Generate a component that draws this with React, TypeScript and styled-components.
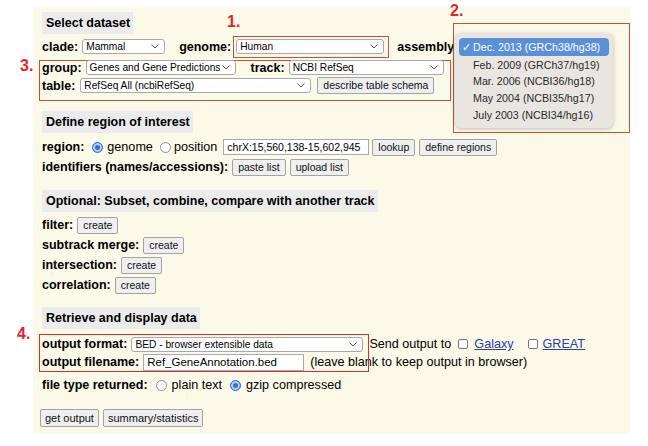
import React from 'react';
import styled, { createGlobalStyle } from 'styled-components';

const GlobalStyle = createGlobalStyle`
    body {
        margin: 0;
        background: #ffffff;
        font-family: "Liberation Sans", Arial, sans-serif;
        color: #000;
    }
`

const assemblies = [
    "Dec. 2013 (GRCh38/hg38)",
    "Feb. 2009 (GRCh37/hg19)",
    "Mar. 2006 (NCBI36/hg18)",
    "May 2004 (NCBI35/hg17)",
    "July 2003 (NCBI34/hg16)",
]

const Chevron = () => (
    <svg width="8" height="5" viewBox="0 0 8 5">
        <polyline points="0.5,0.5 4,4 7.5,0.5" fill="none" stroke="#555" strokeWidth="1" />
    </svg>
)

const Select = ({ width, children }: { width: number; children: React.ReactNode }) => (
    <SelectBox $w={width}>
        <span>{children}</span>
        <Chevron />
    </SelectBox>
)

const Radio = ({ checked }: { checked?: boolean }) => <RadioDot $on={checked} />

export default function App() {
    return (
        <Page>
            <GlobalStyle />
            <Panel>
                <Marker $x={194} $y={7}>1.</Marker>
                <Marker $x={417} $y={-4}>2.</Marker>
                <Marker $x={-13} $y={51}>3.</Marker>
                <Marker $x={-16} $y={319}>4.</Marker>

                <AssemblyFrame>
                    <Menu>
                        {assemblies.map((a, i) => (
                            <MenuItem key={a} $active={i === 0}>
                                <Check>{i === 0 ? '✓' : ''}</Check>
                                {a}
                            </MenuItem>
                        ))}
                    </Menu>
                </AssemblyFrame>

                <Title>Select dataset</Title>
                <Row $h={23} $mt={1}>
                    <Label>clade:</Label>
                    <Spacer $w={4} />
                    <Select width={83}>Mammal</Select>
                    <Spacer $w={14} />
                    <Label>genome:</Label>
                    <Spacer $w={2} />
                    <Outline>
                        <Select width={148}>Human</Select>
                    </Outline>
                    <Spacer $w={8} />
                    <Label>assembly:</Label>
                </Row>

                <Group>
                    <Row $h={13}>
                        <Label>group:</Label>
                        <Spacer $w={4} />
                        <Select width={150}>Genes and Gene Predictions</Select>
                        <Spacer $w={15} />
                        <Label>track:</Label>
                        <Spacer $w={4} />
                        <Select width={155}>NCBI RefSeq</Select>
                    </Row>
                    <Row $h={17} $mt={3}>
                        <Label>table:</Label>
                        <Spacer $w={5} />
                        <Select width={231}>RefSeq All (ncbiRefSeq)</Select>
                        <Spacer $w={6} />
                        <Button>describe table schema</Button>
                    </Row>
                </Group>

                <Title $mt={10}>Define region of interest</Title>
                <Row $h={20} $mt={4}>
                    <Label>region:</Label>
                    <Spacer $w={8} />
                    <Radio checked />
                    <Spacer $w={4} />
                    <Text>genome</Text>
                    <Spacer $w={7} />
                    <Radio />
                    <Spacer $w={3} />
                    <Text>position</Text>
                    <Spacer $w={6} />
                    <Input $w={146}>chrX:15,560,138-15,602,945</Input>
                    <Spacer $w={3} />
                    <Button>lookup</Button>
                    <Spacer $w={4} />
                    <Button>define regions</Button>
                </Row>
                <Row $h={20}>
                    <Label>identifiers (names/accessions):</Label>
                    <Spacer $w={4} />
                    <Button>paste list</Button>
                    <Spacer $w={4} />
                    <Button>upload list</Button>
                </Row>

                <Title $mt={13}>Optional: Subset, combine, compare with another track</Title>
                <Rows $mt={3}>
                    {["filter:", "subtrack merge:", "intersection:", "correlation:"].map(l => (
                        <Row key={l} $h={20}>
                            <Label>{l}</Label>
                            <Spacer $w={4} />
                            <Button>create</Button>
                        </Row>
                    ))}
                </Rows>

                <Title $mt={12}>Retrieve and display data</Title>
                <Output>
                    <OutputFrame />
                    <Row $h={18}>
                        <Label>output format:</Label>
                        <Spacer $w={4} />
                        <Select width={232}>BED - browser extensible data</Select>
                        <Spacer $w={6} />
                        <Text>Send output to</Text>
                        <Spacer $w={7} />
                        <CheckBox />
                        <Spacer $w={6} />
                        <Link href="#">Galaxy</Link>
                        <Spacer $w={14} />
                        <CheckBox />
                        <Spacer $w={5} />
                        <Link href="#">GREAT</Link>
                    </Row>
                    <Row $h={18}>
                        <Label>output filename:</Label>
                        <Spacer $w={4} />
                        <Input $w={161} $big>Ref_GeneAnnotation.bed</Input>
                        <Spacer $w={6} />
                        <Text>(leave blank to keep output in browser)</Text>
                    </Row>
                </Output>
                <Row $h={20} $mt={3}>
                    <Label>file type returned:</Label>
                    <Spacer $w={8} />
                    <Radio />
                    <Spacer $w={5} />
                    <Text>plain text</Text>
                    <Spacer $w={8} />
                    <Radio checked />
                    <Spacer $w={5} />
                    <Text>gzip compressed</Text>
                </Row>
                <Row $h={19} $mt={13} $ml={-2}>
                    <Button $big>get output</Button>
                    <Spacer $w={4} />
                    <Button $big>summary/statistics</Button>
                </Row>
            </Panel>
        </Page>
    );
}

const Page = styled.div`
    padding: 7px 0 0 33px;
`

const Panel = styled.div`
    position: relative;
    box-sizing: border-box;
    width: 597px;
    height: 427px;
    padding: 5px 9px 0 9px;
    background: #fbf9e7;
    display: flex;
    flex-direction: column;
`

const Title = styled.div<{ $mt?: number }>`
    align-self: flex-start;
    height: 22px;
    line-height: 22px;
    margin-top: ${p => p.$mt ?? 0}px;
    padding: 0 3px 0 4px;
    background: #ebebeb;
    font-weight: bold;
    font-size: 12.5px;
    white-space: nowrap;
`

const Row = styled.div<{ $h: number; $mt?: number; $ml?: number }>`
    display: flex;
    align-items: center;
    height: ${p => p.$h}px;
    margin-top: ${p => p.$mt ?? 0}px;
    margin-left: ${p => p.$ml ?? 0}px;
    white-space: nowrap;
`

const Rows = styled.div<{ $mt?: number }>`
    display: flex;
    flex-direction: column;
    margin-top: ${p => p.$mt ?? 0}px;
`

const Spacer = styled.span<{ $w: number }>`
    flex: none;
    width: ${p => p.$w}px;
`

const Label = styled.span`
    font-weight: bold;
    font-size: 12.5px;
`

const Text = styled.span`
    font-size: 12.6px;
`

const SelectBox = styled.div<{ $w: number }>`
    flex: none;
    box-sizing: border-box;
    width: ${p => p.$w}px;
    height: 15px;
    display: flex;
    align-items: center;
    justify-content: space-between;
    padding: 0 5px 0 3px;
    background: #fff;
    border: 1px solid #a9a9a9;
    border-radius: 3px;
    font-size: 10.2px;
    overflow: hidden;
`

const Outline = styled.div`
    display: flex;
    align-items: center;
    box-sizing: border-box;
    height: 22px;
    padding: 0 4px 0 2px;
    border: 1px solid #c5503b;
`

const Group = styled.div`
    box-sizing: border-box;
    width: 412px;
    margin: 2px 0 0 -3px;
    padding: 0 0 6px 2px;
    border: 1px solid #c5503b;
`

const Button = styled.span<{ $big?: boolean }>`
    flex: none;
    box-sizing: border-box;
    height: ${p => (p.$big ? 18 : 17)}px;
    line-height: ${p => (p.$big ? 16 : 15)}px;
    padding: 0 ${p => (p.$big ? 4 : 5)}px;
    background: #efefef;
    border: 1px solid #a3a3a3;
    border-radius: 2px;
    font-size: ${p => (p.$big ? 11 : 10.5)}px;
    color: #111;
`

const Input = styled.span<{ $w: number; $big?: boolean }>`
    flex: none;
    box-sizing: border-box;
    width: ${p => p.$w}px;
    height: ${p => (p.$big ? 17 : 16)}px;
    line-height: ${p => (p.$big ? 15 : 14)}px;
    padding: 0 3px;
    background: #fff;
    border: 1px solid #a9a9a9;
    font-size: ${p => (p.$big ? 11.5 : 10.5)}px;
    overflow: hidden;
`

const RadioDot = styled.span<{ $on?: boolean }>`
    flex: none;
    box-sizing: border-box;
    width: 11px;
    height: 11px;
    border-radius: 50%;
    border: 1px solid ${p => (p.$on ? '#2f72d6' : '#8f8f8f')};
    background: ${p => (p.$on ? '#2f72d6' : '#fff')};
    box-shadow: ${p => (p.$on ? 'inset 0 0 0 2px #bcd3f5' : 'none')};
`

const CheckBox = styled.span`
    flex: none;
    box-sizing: border-box;
    width: 10px;
    height: 10px;
    border: 1px solid #777;
    border-radius: 2px;
    background: #fff;
`

const Link = styled.a`
    font-size: 12.6px;
    color: #2a40a6;
    text-decoration: underline;
`

const Output = styled.div`
    position: relative;
    margin-top: 5px;
    padding: 1px 0;
`

const OutputFrame = styled.div`
    position: absolute;
    top: 0;
    bottom: 0;
    left: -3px;
    width: 330px;
    border: 1px solid #d0312d;
    box-sizing: border-box;
    pointer-events: none;
    z-index: 1;
`

const Marker = styled.div<{ $x: number; $y: number }>`
    position: absolute;
    left: ${p => p.$x}px;
    top: ${p => p.$y}px;
    font-size: 16px;
    line-height: 16px;
    font-weight: bold;
    color: #e5242b;
`

const AssemblyFrame = styled.div`
    position: absolute;
    left: 420px;
    top: 16px;
    width: 177px;
    height: 110px;
    box-sizing: border-box;
    border: 1px solid #c5503b;
    z-index: 2;
`

const Menu = styled.div`
    position: absolute;
    left: 1px;
    top: 9px;
    width: 158px;
    height: 95px;
    box-sizing: border-box;
    padding: 5px 4px;
    background: #e9e5e1;
    border-radius: 6px;
    box-shadow: 0 1px 4px rgba(0, 0, 0, 0.25);
    display: flex;
    flex-direction: column;
`

const MenuItem = styled.div<{ $active?: boolean }>`
    display: flex;
    align-items: center;
    height: 17.4px;
    padding-left: 3px;
    border-radius: 4px;
    font-size: 10.7px;
    white-space: nowrap;
    background: ${p => (p.$active ? '#5b8fd8' : 'transparent')};
    color: ${p => (p.$active ? '#fff' : '#2a2a2a')};
    &:first-child {
        height: 19px;
    }
`

const Check = styled.span`
    width: 11px;
    font-size: 11px;
`
